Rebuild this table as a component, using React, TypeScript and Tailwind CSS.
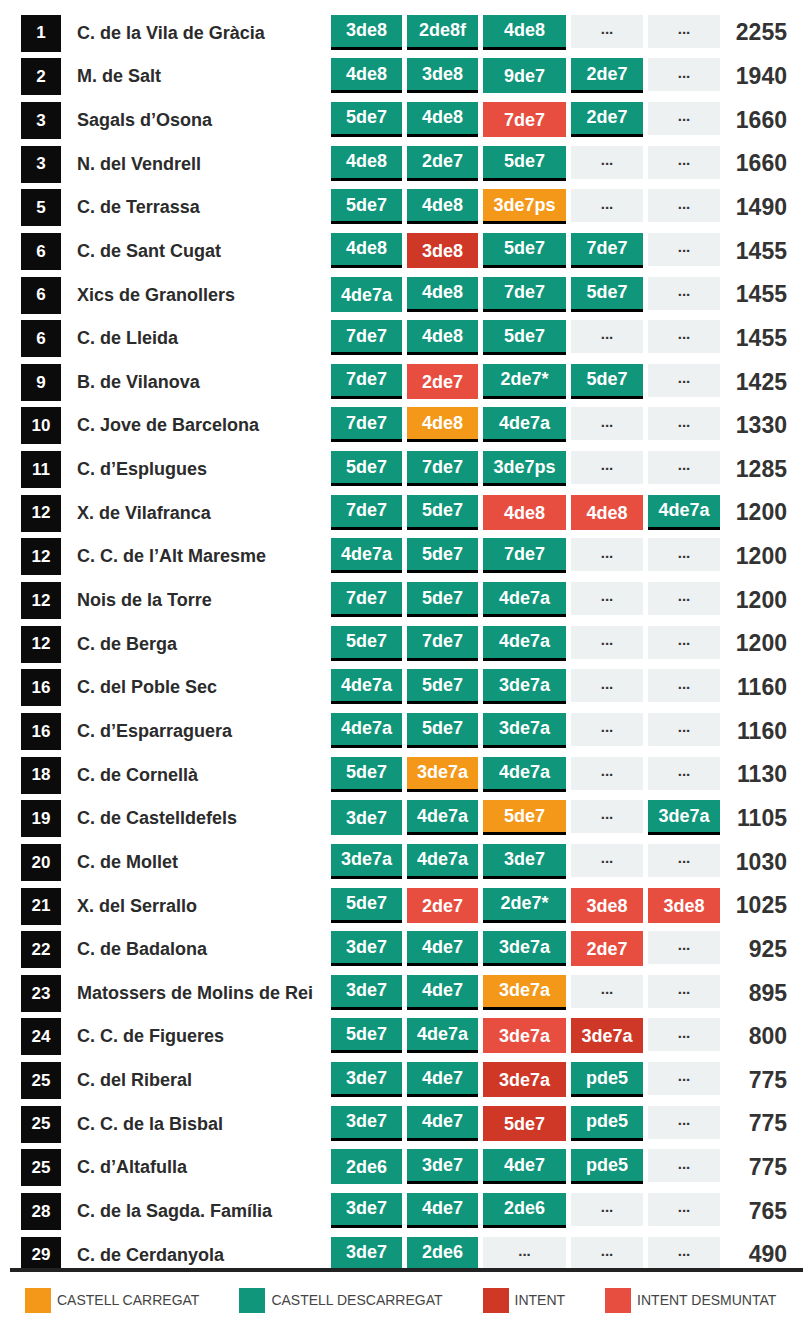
type Kind = "g" | "o" | "r" | "l" | "e";
type Cell = [string, Kind, boolean?];
type Row = { rank: number; name: string; cells: Cell[]; score: number };

const E: Cell = ["...", "e"];

const rows: Row[] = [
  { rank: 1, name: "C. de la Vila de Gràcia", cells: [["3de8", "g", true], ["2de8f", "g", true], ["4de8", "g", true], E, E], score: 2255 },
  { rank: 2, name: "M. de Salt", cells: [["4de8", "g", true], ["3de8", "g", true], ["9de7", "g"], ["2de7", "g", true], E], score: 1940 },
  { rank: 3, name: "Sagals d’Osona", cells: [["5de7", "g", true], ["4de8", "g", true], ["7de7", "l"], ["2de7", "g", true], E], score: 1660 },
  { rank: 3, name: "N. del Vendrell", cells: [["4de8", "g", true], ["2de7", "g", true], ["5de7", "g", true], E, E], score: 1660 },
  { rank: 5, name: "C. de Terrassa", cells: [["5de7", "g", true], ["4de8", "g", true], ["3de7ps", "o", true], E, E], score: 1490 },
  { rank: 6, name: "C. de Sant Cugat", cells: [["4de8", "g", true], ["3de8", "r"], ["5de7", "g", true], ["7de7", "g", true], E], score: 1455 },
  { rank: 6, name: "Xics de Granollers", cells: [["4de7a", "g"], ["4de8", "g", true], ["7de7", "g", true], ["5de7", "g", true], E], score: 1455 },
  { rank: 6, name: "C. de Lleida", cells: [["7de7", "g", true], ["4de8", "g", true], ["5de7", "g", true], E, E], score: 1455 },
  { rank: 9, name: "B. de Vilanova", cells: [["7de7", "g", true], ["2de7", "l"], ["2de7*", "g", true], ["5de7", "g", true], E], score: 1425 },
  { rank: 10, name: "C. Jove de Barcelona", cells: [["7de7", "g", true], ["4de8", "o", true], ["4de7a", "g", true], E, E], score: 1330 },
  { rank: 11, name: "C. d’Esplugues", cells: [["5de7", "g", true], ["7de7", "g", true], ["3de7ps", "g", true], E, E], score: 1285 },
  { rank: 12, name: "X. de Vilafranca", cells: [["7de7", "g", true], ["5de7", "g", true], ["4de8", "l"], ["4de8", "l"], ["4de7a", "g", true]], score: 1200 },
  { rank: 12, name: "C. C. de l’Alt Maresme", cells: [["4de7a", "g", true], ["5de7", "g", true], ["7de7", "g", true], E, E], score: 1200 },
  { rank: 12, name: "Nois de la Torre", cells: [["7de7", "g", true], ["5de7", "g", true], ["4de7a", "g", true], E, E], score: 1200 },
  { rank: 12, name: "C. de Berga", cells: [["5de7", "g", true], ["7de7", "g", true], ["4de7a", "g", true], E, E], score: 1200 },
  { rank: 16, name: "C. del Poble Sec", cells: [["4de7a", "g", true], ["5de7", "g", true], ["3de7a", "g", true], E, E], score: 1160 },
  { rank: 16, name: "C. d’Esparraguera", cells: [["4de7a", "g", true], ["5de7", "g", true], ["3de7a", "g", true], E, E], score: 1160 },
  { rank: 18, name: "C. de Cornellà", cells: [["5de7", "g", true], ["3de7a", "o", true], ["4de7a", "g", true], E, E], score: 1130 },
  { rank: 19, name: "C. de Castelldefels", cells: [["3de7", "g"], ["4de7a", "g", true], ["5de7", "o", true], E, ["3de7a", "g", true]], score: 1105 },
  { rank: 20, name: "C. de Mollet", cells: [["3de7a", "g", true], ["4de7a", "g", true], ["3de7", "g", true], E, E], score: 1030 },
  { rank: 21, name: "X. del Serrallo", cells: [["5de7", "g", true], ["2de7", "l"], ["2de7*", "g", true], ["3de8", "l"], ["3de8", "l"]], score: 1025 },
  { rank: 22, name: "C. de Badalona", cells: [["3de7", "g", true], ["4de7", "g", true], ["3de7a", "g", true], ["2de7", "l"], E], score: 925 },
  { rank: 23, name: "Matossers de Molins de Rei", cells: [["3de7", "g", true], ["4de7", "g", true], ["3de7a", "o", true], E, E], score: 895 },
  { rank: 24, name: "C. C. de Figueres", cells: [["5de7", "g", true], ["4de7a", "g", true], ["3de7a", "l"], ["3de7a", "r"], E], score: 800 },
  { rank: 25, name: "C. del Riberal", cells: [["3de7", "g", true], ["4de7", "g", true], ["3de7a", "r"], ["pde5", "g", true], E], score: 775 },
  { rank: 25, name: "C. C. de la Bisbal", cells: [["3de7", "g", true], ["4de7", "g", true], ["5de7", "r"], ["pde5", "g", true], E], score: 775 },
  { rank: 25, name: "C. d’Altafulla", cells: [["2de6", "g"], ["3de7", "g", true], ["4de7", "g", true], ["pde5", "g", true], E], score: 775 },
  { rank: 28, name: "C. de la Sagda. Família", cells: [["3de7", "g", true], ["4de7", "g", true], ["2de6", "g", true], E, E], score: 765 },
  { rank: 29, name: "C. de Cerdanyola", cells: [["3de7", "g", true], ["2de6", "g", true], E, E, E], score: 490 },
];

const bg: Record<Kind, string> = {
  g: "bg-[#0f967b]",
  o: "bg-[#f4981a]",
  r: "bg-[#cf3727]",
  l: "bg-[#e84e40]",
  e: "bg-[#eef1f2]",
};

const widths = ["w-[71px]", "w-[71px]", "w-[83px]", "w-[72px]", "w-[72px]"];

function CellBox({ cell, w }: { cell: Cell; w: string }) {
  const [text, kind, under] = cell;
  if (kind === "e") {
    return (
      <div className={`${w} h-[33px] ${bg.e} flex items-center justify-center text-[15px] font-bold text-[#333] pb-[4px]`}>
        {text}
      </div>
    );
  }
  return (
    <div
      className={`${w} ${under ? "h-[35px] border-b-[3px] border-black" : "h-[35px] pt-[2px]"} ${bg[kind]} flex items-center justify-center text-[18px] font-bold text-white`}
    >
      {text}
    </div>
  );
}

export default function App() {
  return (
    <div className="w-[809px] h-[1332px] bg-white font-['Liberation_Sans',Arial,sans-serif]">
      <div className="h-[1268px] overflow-hidden pt-[14.7px]">
        {rows.map((r, i) => (
          <div key={i} className="h-[43.65px] flex items-start">
            <div className="ml-[21px] w-[40px] h-[37px] bg-[#0b0b0b] text-white text-[17px] font-bold flex items-center justify-center">
              {r.rank}
            </div>
            <div className="w-[270px] pl-[16px] h-[37px] flex items-center text-[18px] font-bold text-[#2b2b2b] whitespace-nowrap">
              {r.name}
            </div>
            <div className="flex gap-[5px]">
              {r.cells.map((c, j) => (
                <CellBox key={j} cell={c} w={widths[j]} />
              ))}
            </div>
            <div className="w-[67px] h-[36px] flex items-center justify-end text-[23px] font-bold text-[#333]">
              {r.score}
            </div>
          </div>
        ))}
      </div>
      <div className="ml-[10px] w-[793px] h-[4px] bg-[#222]" />
      <div className="mt-[16px] pl-[25px] flex items-center gap-[40px] text-[14px] text-[#444]">
        <div className="flex items-center gap-[6px]">
          <div className="w-[26px] h-[25px] bg-[#f4981a]" />
          <span>CASTELL CARREGAT</span>
        </div>
        <div className="flex items-center gap-[6px]">
          <div className="w-[26px] h-[25px] bg-[#0f967b]" />
          <span>CASTELL DESCARREGAT</span>
        </div>
        <div className="flex items-center gap-[6px]">
          <div className="w-[26px] h-[25px] bg-[#cf3727]" />
          <span>INTENT</span>
        </div>
        <div className="flex items-center gap-[6px]">
          <div className="w-[26px] h-[25px] bg-[#e84e40]" />
          <span>INTENT DESMUNTAT</span>
        </div>
      </div>
    </div>
  );
}
